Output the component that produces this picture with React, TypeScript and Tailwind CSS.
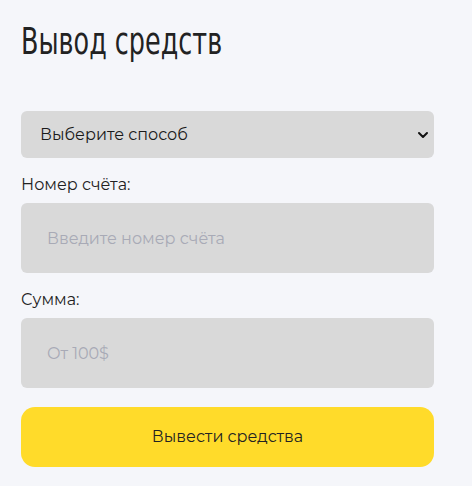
import React, { useState } from 'react';

// Formulaire de retrait
export default function App() {
  const [method, setMethod] = useState('');
  const [account, setAccount] = useState('');
  const [amount, setAmount] = useState('');

  return (
    <div className="min-h-[486px] w-full bg-[#f5f6fa] font-['Montserrat','Open_Sans',sans-serif] text-[#1d1d1f]">
      <div className="w-[413px] ml-[21px] pt-[18px]">
        <h1 className="font-['DejaVu_Sans_Condensed','DejaVu_Sans',sans-serif] [font-stretch:condensed] text-[37px] leading-[48px] text-[#222] origin-left scale-x-[0.765] inline-block whitespace-nowrap">
          Вывод средств
        </h1>

        <div className="relative mt-[45px]">
          <select
            value={method}
            onChange={(e) => setMethod(e.target.value)}
            className="w-full h-[47px] appearance-none rounded-[6px] bg-[#d9d9d9] pl-[19px] pr-10 text-[16px] text-[#1a1a1a] outline-none"
          >
            <option value="">Выберите способ</option>
            <option value="card">Банковская карта</option>
            <option value="crypto">Криптовалюта</option>
          </select>
          <svg
            className="pointer-events-none absolute right-[5px] top-1/2 -translate-y-1/2"
            width="12"
            height="12"
            viewBox="0 0 12 12"
          >
            <path d="M2 4l4 4 4-4" fill="none" stroke="#111" strokeWidth="2" strokeLinecap="round" strokeLinejoin="round" />
          </svg>
        </div>

        <label className="block mt-[17px] text-[16px] leading-[20px] text-[#222]">Номер счёта:</label>
        <input
          value={account}
          onChange={(e) => setAccount(e.target.value)}
          placeholder="Введите номер счёта"
          className="mt-[8px] w-full h-[70px] rounded-[6px] bg-[#d9d9d9] px-[26px] text-[16px] placeholder:text-[#a8aab6] outline-none"
        />

        <label className="block mt-[17px] text-[16px] leading-[20px] text-[#222]">Сумма:</label>
        <input
          value={amount}
          onChange={(e) => setAmount(e.target.value)}
          placeholder="От 100$"
          className="mt-[8px] w-full h-[70px] rounded-[6px] bg-[#d9d9d9] px-[26px] text-[16px] placeholder:text-[#a8aab6] outline-none"
        />

        <button className="mt-[19px] w-full h-[60px] rounded-[14px] bg-[#ffdb2a] text-[16px] text-[#222]">
          Вывести средства
        </button>
      </div>
    </div>
  );
}
